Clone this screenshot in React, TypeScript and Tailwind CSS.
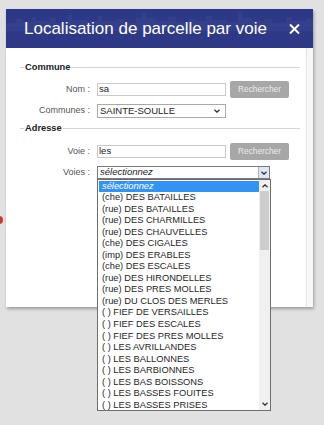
const voies = [
  '(che) DES BATAILLES',
  '(rue) DES BATAILLES',
  '(rue) DES CHARMILLES',
  '(rue) DES CHAUVELLES',
  '(che) DES CIGALES',
  '(imp) DES ERABLES',
  '(che) DES ESCALES',
  '(rue) DES HIRONDELLES',
  '(rue) DES PRES MOLLES',
  '(rue) DU CLOS DES MERLES',
  '( ) FIEF DE VERSAILLES',
  '( ) FIEF DES ESCALES',
  '( ) FIEF DES PRES MOLLES',
  '( ) LES AVRILLANDES',
  '( ) LES BALLONNES',
  '( ) LES BARBIONNES',
  '( ) LES BAS BOISSONS',
  '( ) LES BASSES FOUITES',
  '( ) LES BASSES PRISES',
];

function Legend({ title }: { title: string }) {
  return (
    <div className="flex items-center h-[11px]">
      <div className="w-[4px] h-px bg-[#d0d0d0]" />
      <span className="px-[1px] text-[9.3px] font-bold text-[#222]">{title}</span>
      <div className="flex-1 h-px bg-[#d6d6d6]" />
    </div>
  );
}

function Label({ text }: { text: string }) {
  return <span className="w-[71px] pr-[1px] text-right text-[9px] text-[#555] shrink-0">{text}</span>;
}

function Chevron({ className }: { className?: string }) {
  return (
    <svg width="6" height="4" viewBox="0 0 6 4" className={className}>
      <path d="M0.5 0.8 L3 3.2 L5.5 0.8" fill="none" stroke="#333" strokeWidth="1.3" />
    </svg>
  );
}

function SearchButton() {
  return (
    <button className="ml-[4px] w-[59px] h-[17px] rounded-[2px] bg-[#a7a7a7] text-[8.3px] text-[#ececec]">
      Rechercher
    </button>
  );
}

export default function App() {
  return (
    <div className="relative w-[324px] h-[425px] overflow-hidden bg-[#e1e1e1] pl-[6px] pt-[9px] font-['Liberation_Sans',Arial,sans-serif]">
      {/* marker behind the dialog */}
      <div className="absolute left-[-5px] top-[216px] w-[8px] h-[8px] rounded-full bg-[#c63a30]" />

      <div className="relative w-[307px] h-[298px] flex flex-col bg-white shadow-[1px_2px_3px_rgba(0,0,0,0.3)]">
        <div className="relative h-[39px] flex items-center justify-between bg-[#2d3986] pl-[18px] pr-[13px] overflow-hidden">
          <svg className="absolute left-0 top-0" width="307" height="22" viewBox="0 0 307 22">
            <path
              d="M0 22 V14 H10 V10 H16 V13 H26 V8 H30 V12 H44 V9 H50 V14 H62 V6 H66 V11 H80 V12 H92 V7 H96 V12 H110 V10 H118 V14 H130 V9 H136 V4 H140 V9 H150 V12 H162 V8 H170 V13 H182 V10 H190 V12 H200 V7 H206 V11 H220 V13 H232 V3 H236 V9 H246 V12 H258 V10 H266 V14 H280 V8 H286 V12 H300 V10 H307 V22 Z"
              fill="#3a4693"
              opacity="0.6"
            />
          </svg>
          <span className="relative text-[17px] text-white leading-none">Localisation de parcelle par voie</span>
          <svg className="relative" width="11" height="10" viewBox="0 0 11 10">
            <path d="M1 0.5 L10 9.5 M10 0.5 L1 9.5" stroke="white" strokeWidth="2" />
          </svg>
        </div>

        <div className="flex flex-1">
          <div className="flex-1 pl-[14px] pr-[6px] pt-[14px]">
            <Legend title="Commune" />

            <div className="flex items-center h-[17px] mt-[8px]">
              <Label text="Nom :" />
              <input
                readOnly
                value="sa"
                className="ml-[6px] w-[129px] h-[13px] border border-[#c9c9c9] px-[1px] text-[9.5px] text-[#222] outline-none"
              />
              <SearchButton />
            </div>

            <div className="flex items-center h-[14px] mt-[6px]">
              <Label text="Communes :" />
              <div className="ml-[6px] w-[129px] h-[14px] border border-[#a9a9a9] flex items-center justify-between pl-[2px] pr-[5px]">
                <span className="text-[9.5px] text-[#222]">SAINTE-SOULLE</span>
                <Chevron />
              </div>
            </div>

            <div className="mt-[5px]">
              <Legend title="Adresse" />
            </div>

            <div className="flex items-center h-[17px] mt-[9px]">
              <Label text="Voie :" />
              <input
                readOnly
                value="les"
                className="ml-[6px] w-[129px] h-[13px] border border-[#c9c9c9] px-[1px] text-[9.5px] text-[#222] outline-none"
              />
              <SearchButton />
            </div>

            <div className="flex items-center h-[13px] mt-[6px]">
              <Label text="Voies :" />
              <div className="relative ml-[6px] w-[173px] h-[13px] border border-[#7a7a7a] flex items-center justify-between pl-[2px]">
                <span className="text-[9.5px] italic text-[#222]">sélectionnez</span>
                <div className="w-[11px] h-full bg-[#dce8f5] border-l border-[#9cb4d0] flex items-center justify-center">
                  <Chevron />
                </div>

                <div className="absolute left-[-1px] top-[12px] w-[174px] h-[232px] bg-white border border-[#6e6e6e] flex z-10">
                  <div className="flex-1 pl-[1px] pt-[1px]">
                    <div className="bg-[#3393f5] text-white italic text-[9.3px] leading-[11px] pl-[3px]">sélectionnez</div>
                    {voies.map((v) => (
                      <div key={v} className="text-[9.3px] leading-[11.55px] text-[#1e1e1e] pl-[3px] whitespace-nowrap">
                        {v}
                      </div>
                    ))}
                  </div>
                  <div className="w-[11px] bg-[#f0f0f0] flex flex-col items-center">
                    <Chevron className="mt-[4px] rotate-180" />
                    <div className="mt-[3px] w-[9px] h-[59px] bg-[#cdcdcd]" />
                    <div className="flex-1" />
                    <Chevron className="mb-[4px]" />
                  </div>
                </div>
              </div>
            </div>
          </div>
          <div className="w-[7px] bg-[#f8f8f8] border-l border-[#e4e4e4]" />
        </div>
      </div>
    </div>
  );
}
